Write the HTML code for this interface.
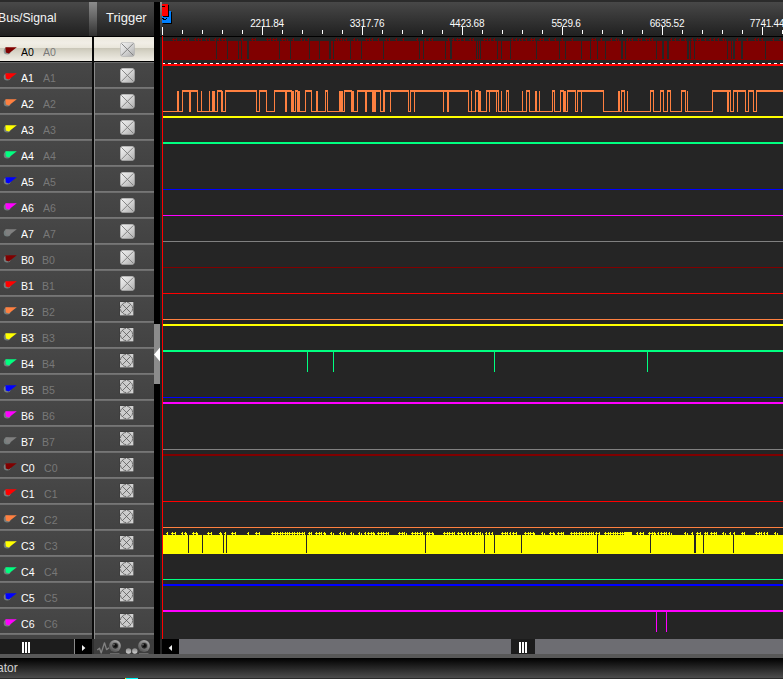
<!DOCTYPE html>
<html><head><meta charset="utf-8"><title>Logic Analyzer</title>
<style>
html,body{margin:0;padding:0;background:#252525;}
body{width:783px;height:679px;overflow:hidden;position:relative;font-family:"Liberation Sans","DejaVu Sans",sans-serif;}
.abs{position:absolute;}
#top{left:0;top:0;width:783px;height:2px;background:#2b2b2b;}
#hdrL{left:0;top:2px;width:154px;height:34px;background:linear-gradient(#494949,#202020);}
#hdrR{left:160px;top:2px;width:623px;height:34px;background:linear-gradient(#484848,#202020);}
#hbar{left:89px;top:2px;width:8px;height:34px;background:linear-gradient(#8c8c8c,#6a6a6a 40%,#303030);}
#hline{left:0;top:36px;width:783px;height:1px;background:#000;}
#split{left:154px;top:2px;width:6px;height:652px;background:#000;}
#grip{left:154px;top:324px;width:6px;height:60px;background:#8c8c8c;}
#edge{left:160px;top:2px;width:2px;height:34px;background:linear-gradient(#9a9a9a,#555 50%,#1f1f1f);}
#edge2{left:160px;top:37px;width:2px;height:602px;background:#1b2222;}
#cursor{left:162px;top:36px;width:1px;height:603px;background:#ff0000;}
.hd{color:#f4f4f4;font-size:13px;line-height:15px;white-space:nowrap;}
.row{left:0;width:154px;height:26px;}
.cellL{left:0;top:0;width:92px;height:24px;background:linear-gradient(#474747,#424242);}
.cellR{left:94px;top:0;width:60px;height:24px;background:linear-gradient(#474747,#424242);}
.sepL{left:0;top:24px;width:92px;height:2px;background:linear-gradient(#7a7a7a,#6a6a6a);}
.sepR{left:94px;top:24px;width:60px;height:2px;background:linear-gradient(#7a7a7a,#6a6a6a);}
.vl{left:92px;top:0;width:2px;height:26px;background:#0a0a0a;}
.vl2{left:94px;top:0;width:1px;height:26px;background:#8a8a8a;}
.sel .cellL,.sel .cellR{background:linear-gradient(#ebe8dd 0%,#f1eee6 25%,#e9e6db 45%,#c9c6b7 46%,#d6d3c6 60%,#f0ede5 100%);}
.sel .sepL,.sel .sepR{background:linear-gradient(#000 50%,#6c6c6c 50%);}
.sel .vl2{display:none;}
.n1,.n2{font-size:11px;line-height:13px;top:9px;white-space:nowrap;transform-origin:0 0;transform:scaleX(0.96);}
.n1{left:21px;color:#ffffff;}
.n2{color:#787878;}
.sel .n1{color:#000;}
.sel .n2{color:#7a7a7a;}
.ico{left:0;top:0;width:20px;height:24px;}
.cb{left:120px;top:5px;width:15px;height:15px;}
.cbs{left:119px;top:4px;width:16px;height:16px;}
.tl{color:#fbfbfb;font-size:10px;line-height:12px;top:18px;width:60px;text-align:center;white-space:nowrap;letter-spacing:-0.25px;}
#sbL{left:0;top:639px;width:74px;height:15px;background:#1c1c1c;}
#sbLl{left:74px;top:639px;width:1px;height:15px;background:#8a8a8a;}
#sbLb{left:75px;top:639px;width:17px;height:15px;background:#000;}
#sbLv{left:92px;top:639px;width:2px;height:15px;background:#2e2e2e;}
#tools{left:94px;top:639px;width:60px;height:15px;background:#3d3d3d;}
#pad{left:0;top:635px;width:154px;height:4px;}
#sbRb{left:162px;top:639px;width:17px;height:15px;background:#000;}
#sbRt{left:179px;top:639px;width:604px;height:15px;background:#6d6d72;}
#sbRh{left:511px;top:639px;width:24px;height:15px;background:#1c1c1c;}
#band{left:0;top:654px;width:783px;height:4px;background:#585858;}
#foot{left:0;top:658px;width:783px;height:20px;background:linear-gradient(#000000,#4c4c4c);}
#foot2{left:0;top:678px;width:783px;height:1px;background:#2b2b2b;}
#ftxt{left:-3px;top:661px;color:#d0d0d0;font-size:12px;line-height:15px;white-space:nowrap;}
#cy{left:125px;top:678px;width:13px;height:1px;background:linear-gradient(90deg,#ffff00 1px,#00ffff 1px);}
</style></head><body>

<svg class="abs" style="left:0;top:0" width="0" height="0"><defs><linearGradient id="g" x1="0" y1="0" x2="1" y2="1"><stop offset="0" stop-color="#f2f2f2"/><stop offset="0.5" stop-color="#d6d6d6"/><stop offset="1" stop-color="#ababab"/></linearGradient></defs></svg>
<div class="abs" id="top"></div><div class="abs" id="hdrL"></div><div class="abs" id="hdrR"></div><div class="abs" id="hbar"></div>
<div class="abs" id="split"></div><div class="abs" id="grip"></div><div class="abs" id="edge"></div><div class="abs" id="edge2"></div><div class="abs" id="hline"></div>
<div class="abs hd" id="h1" style="left:-2px;top:10px;transform-origin:0 0;transform:scaleX(0.94)">Bus/Signal</div>
<div class="abs hd" id="h2" style="left:106px;top:10px;">Trigger</div>
<div class="abs tl" style="left:237px">2211.84</div>
<div class="abs tl" style="left:337px">3317.76</div>
<div class="abs tl" style="left:437px">4423.68</div>
<div class="abs tl" style="left:536px">5529.6</div>
<div class="abs tl" style="left:637px">6635.52</div>
<div class="abs tl" style="left:737px">7741.44</div>
<div class="row abs sel" style="top:37px"><div class="abs cellL"></div><div class="abs cellR"></div><div class="abs sepL"></div><div class="abs sepR"></div><div class="abs vl"></div><div class="abs vl2"></div><svg class="abs ico" width="20" height="24" viewBox="0 0 20 24"><circle cx="7.2" cy="13.9" r="3.5" fill="#808c8c" opacity="0.8"/><polygon points="5.4,10.2 16.8,10.2 8.8,16.6 5.8,15.4" fill="#800000"/></svg><div class="abs n1">A0</div><div class="abs n2" style="left:43px">A0</div><svg class="abs cb" width="15" height="15" viewBox="0 0 15 15"><rect x="0.3" y="0.3" width="14.2" height="14.2" rx="2.8" fill="url(#g)" stroke="#b0b0b0" stroke-width="0.6"/><path d="M1.5 1.5L13.3 13.3M13.3 1.5L1.5 13.3" stroke="#7c7c7c" stroke-width="0.9" fill="none"/></svg></div>
<div class="row abs" style="top:63px"><div class="abs cellL"></div><div class="abs cellR"></div><div class="abs sepL"></div><div class="abs sepR"></div><div class="abs vl"></div><div class="abs vl2"></div><svg class="abs ico" width="20" height="24" viewBox="0 0 20 24"><circle cx="7.2" cy="13.9" r="3.5" fill="#808c8c" opacity="0.8"/><polygon points="5.4,10.2 16.8,10.2 8.8,16.6 5.8,15.4" fill="#ff0000"/></svg><div class="abs n1">A1</div><div class="abs n2" style="left:43px">A1</div><svg class="abs cb" width="15" height="15" viewBox="0 0 15 15"><rect x="0.3" y="0.3" width="14.2" height="14.2" rx="2.8" fill="url(#g)" stroke="#b0b0b0" stroke-width="0.6"/><path d="M1.5 1.5L13.3 13.3M13.3 1.5L1.5 13.3" stroke="#7c7c7c" stroke-width="0.9" fill="none"/></svg></div>
<div class="row abs" style="top:89px"><div class="abs cellL"></div><div class="abs cellR"></div><div class="abs sepL"></div><div class="abs sepR"></div><div class="abs vl"></div><div class="abs vl2"></div><svg class="abs ico" width="20" height="24" viewBox="0 0 20 24"><circle cx="7.2" cy="13.9" r="3.5" fill="#808c8c" opacity="0.8"/><polygon points="5.4,10.2 16.8,10.2 8.8,16.6 5.8,15.4" fill="#ff8040"/></svg><div class="abs n1">A2</div><div class="abs n2" style="left:43px">A2</div><svg class="abs cb" width="15" height="15" viewBox="0 0 15 15"><rect x="0.3" y="0.3" width="14.2" height="14.2" rx="2.8" fill="url(#g)" stroke="#b0b0b0" stroke-width="0.6"/><path d="M1.5 1.5L13.3 13.3M13.3 1.5L1.5 13.3" stroke="#7c7c7c" stroke-width="0.9" fill="none"/></svg></div>
<div class="row abs" style="top:115px"><div class="abs cellL"></div><div class="abs cellR"></div><div class="abs sepL"></div><div class="abs sepR"></div><div class="abs vl"></div><div class="abs vl2"></div><svg class="abs ico" width="20" height="24" viewBox="0 0 20 24"><circle cx="7.2" cy="13.9" r="3.5" fill="#808c8c" opacity="0.8"/><polygon points="5.4,10.2 16.8,10.2 8.8,16.6 5.8,15.4" fill="#ffff00"/></svg><div class="abs n1">A3</div><div class="abs n2" style="left:43px">A3</div><svg class="abs cb" width="15" height="15" viewBox="0 0 15 15"><rect x="0.3" y="0.3" width="14.2" height="14.2" rx="2.8" fill="url(#g)" stroke="#b0b0b0" stroke-width="0.6"/><path d="M1.5 1.5L13.3 13.3M13.3 1.5L1.5 13.3" stroke="#7c7c7c" stroke-width="0.9" fill="none"/></svg></div>
<div class="row abs" style="top:141px"><div class="abs cellL"></div><div class="abs cellR"></div><div class="abs sepL"></div><div class="abs sepR"></div><div class="abs vl"></div><div class="abs vl2"></div><svg class="abs ico" width="20" height="24" viewBox="0 0 20 24"><circle cx="7.2" cy="13.9" r="3.5" fill="#808c8c" opacity="0.8"/><polygon points="5.4,10.2 16.8,10.2 8.8,16.6 5.8,15.4" fill="#00ff80"/></svg><div class="abs n1">A4</div><div class="abs n2" style="left:43px">A4</div><svg class="abs cb" width="15" height="15" viewBox="0 0 15 15"><rect x="0.3" y="0.3" width="14.2" height="14.2" rx="2.8" fill="url(#g)" stroke="#b0b0b0" stroke-width="0.6"/><path d="M1.5 1.5L13.3 13.3M13.3 1.5L1.5 13.3" stroke="#7c7c7c" stroke-width="0.9" fill="none"/></svg></div>
<div class="row abs" style="top:167px"><div class="abs cellL"></div><div class="abs cellR"></div><div class="abs sepL"></div><div class="abs sepR"></div><div class="abs vl"></div><div class="abs vl2"></div><svg class="abs ico" width="20" height="24" viewBox="0 0 20 24"><circle cx="7.2" cy="13.9" r="3.5" fill="#808c8c" opacity="0.8"/><polygon points="5.4,10.2 16.8,10.2 8.8,16.6 5.8,15.4" fill="#0000ff"/></svg><div class="abs n1">A5</div><div class="abs n2" style="left:43px">A5</div><svg class="abs cb" width="15" height="15" viewBox="0 0 15 15"><rect x="0.3" y="0.3" width="14.2" height="14.2" rx="2.8" fill="url(#g)" stroke="#b0b0b0" stroke-width="0.6"/><path d="M1.5 1.5L13.3 13.3M13.3 1.5L1.5 13.3" stroke="#7c7c7c" stroke-width="0.9" fill="none"/></svg></div>
<div class="row abs" style="top:193px"><div class="abs cellL"></div><div class="abs cellR"></div><div class="abs sepL"></div><div class="abs sepR"></div><div class="abs vl"></div><div class="abs vl2"></div><svg class="abs ico" width="20" height="24" viewBox="0 0 20 24"><circle cx="7.2" cy="13.9" r="3.5" fill="#808c8c" opacity="0.8"/><polygon points="5.4,10.2 16.8,10.2 8.8,16.6 5.8,15.4" fill="#ff00ff"/></svg><div class="abs n1">A6</div><div class="abs n2" style="left:43px">A6</div><svg class="abs cb" width="15" height="15" viewBox="0 0 15 15"><rect x="0.3" y="0.3" width="14.2" height="14.2" rx="2.8" fill="url(#g)" stroke="#b0b0b0" stroke-width="0.6"/><path d="M1.5 1.5L13.3 13.3M13.3 1.5L1.5 13.3" stroke="#7c7c7c" stroke-width="0.9" fill="none"/></svg></div>
<div class="row abs" style="top:219px"><div class="abs cellL"></div><div class="abs cellR"></div><div class="abs sepL"></div><div class="abs sepR"></div><div class="abs vl"></div><div class="abs vl2"></div><svg class="abs ico" width="20" height="24" viewBox="0 0 20 24"><circle cx="7.2" cy="13.9" r="3.5" fill="#808c8c" opacity="0.8"/><polygon points="5.4,10.2 16.8,10.2 8.8,16.6 5.8,15.4" fill="#808080"/></svg><div class="abs n1">A7</div><div class="abs n2" style="left:43px">A7</div><svg class="abs cb" width="15" height="15" viewBox="0 0 15 15"><rect x="0.3" y="0.3" width="14.2" height="14.2" rx="2.8" fill="url(#g)" stroke="#b0b0b0" stroke-width="0.6"/><path d="M1.5 1.5L13.3 13.3M13.3 1.5L1.5 13.3" stroke="#7c7c7c" stroke-width="0.9" fill="none"/></svg></div>
<div class="row abs" style="top:245px"><div class="abs cellL"></div><div class="abs cellR"></div><div class="abs sepL"></div><div class="abs sepR"></div><div class="abs vl"></div><div class="abs vl2"></div><svg class="abs ico" width="20" height="24" viewBox="0 0 20 24"><circle cx="7.2" cy="13.9" r="3.5" fill="#808c8c" opacity="0.8"/><polygon points="5.4,10.2 16.8,10.2 8.8,16.6 5.8,15.4" fill="#800000"/></svg><div class="abs n1">B0</div><div class="abs n2" style="left:41.5px">B0</div><svg class="abs cb" width="15" height="15" viewBox="0 0 15 15"><rect x="0.3" y="0.3" width="14.2" height="14.2" rx="2.8" fill="url(#g)" stroke="#b0b0b0" stroke-width="0.6"/><path d="M1.5 1.5L13.3 13.3M13.3 1.5L1.5 13.3" stroke="#7c7c7c" stroke-width="0.9" fill="none"/></svg></div>
<div class="row abs" style="top:271px"><div class="abs cellL"></div><div class="abs cellR"></div><div class="abs sepL"></div><div class="abs sepR"></div><div class="abs vl"></div><div class="abs vl2"></div><svg class="abs ico" width="20" height="24" viewBox="0 0 20 24"><circle cx="7.2" cy="13.9" r="3.5" fill="#808c8c" opacity="0.8"/><polygon points="5.4,10.2 16.8,10.2 8.8,16.6 5.8,15.4" fill="#ff0000"/></svg><div class="abs n1">B1</div><div class="abs n2" style="left:41.5px">B1</div><svg class="abs cb" width="15" height="15" viewBox="0 0 15 15"><rect x="0.3" y="0.3" width="14.2" height="14.2" rx="2.8" fill="url(#g)" stroke="#b0b0b0" stroke-width="0.6"/><path d="M1.5 1.5L13.3 13.3M13.3 1.5L1.5 13.3" stroke="#7c7c7c" stroke-width="0.9" fill="none"/></svg></div>
<div class="row abs" style="top:297px"><div class="abs cellL"></div><div class="abs cellR"></div><div class="abs sepL"></div><div class="abs sepR"></div><div class="abs vl"></div><div class="abs vl2"></div><svg class="abs ico" width="20" height="24" viewBox="0 0 20 24"><circle cx="7.2" cy="13.9" r="3.5" fill="#808c8c" opacity="0.8"/><polygon points="5.4,10.2 16.8,10.2 8.8,16.6 5.8,15.4" fill="#ff8040"/></svg><div class="abs n1">B2</div><div class="abs n2" style="left:41.5px">B2</div><svg class="abs cbs" width="16" height="16" viewBox="-1 -1 16 16"><rect x="-0.5" y="-0.5" width="14.3" height="14.3" fill="#383838"/><rect x="0" y="0" width="13.4" height="13.4" fill="#d0d0d0"/><circle cx="6.5" cy="6.5" r="6.1" fill="#cccccc" stroke="#505050" stroke-opacity="0.85" stroke-width="0.9" stroke-dasharray="3.4 1.4"/><path d="M2 2L11 11M11 2L2 11" stroke="#505050" stroke-width="0.8" stroke-opacity="0.9" fill="none"/></svg></div>
<div class="row abs" style="top:323px"><div class="abs cellL"></div><div class="abs cellR"></div><div class="abs sepL"></div><div class="abs sepR"></div><div class="abs vl"></div><div class="abs vl2"></div><svg class="abs ico" width="20" height="24" viewBox="0 0 20 24"><circle cx="7.2" cy="13.9" r="3.5" fill="#808c8c" opacity="0.8"/><polygon points="5.4,10.2 16.8,10.2 8.8,16.6 5.8,15.4" fill="#ffff00"/></svg><div class="abs n1">B3</div><div class="abs n2" style="left:41.5px">B3</div><svg class="abs cbs" width="16" height="16" viewBox="-1 -1 16 16"><rect x="-0.5" y="-0.5" width="14.3" height="14.3" fill="#383838"/><rect x="0" y="0" width="13.4" height="13.4" fill="#d0d0d0"/><circle cx="6.5" cy="6.5" r="6.1" fill="#cccccc" stroke="#505050" stroke-opacity="0.85" stroke-width="0.9" stroke-dasharray="3.4 1.4"/><path d="M2 2L11 11M11 2L2 11" stroke="#505050" stroke-width="0.8" stroke-opacity="0.9" fill="none"/></svg></div>
<div class="row abs" style="top:349px"><div class="abs cellL"></div><div class="abs cellR"></div><div class="abs sepL"></div><div class="abs sepR"></div><div class="abs vl"></div><div class="abs vl2"></div><svg class="abs ico" width="20" height="24" viewBox="0 0 20 24"><circle cx="7.2" cy="13.9" r="3.5" fill="#808c8c" opacity="0.8"/><polygon points="5.4,10.2 16.8,10.2 8.8,16.6 5.8,15.4" fill="#00ff80"/></svg><div class="abs n1">B4</div><div class="abs n2" style="left:41.5px">B4</div><svg class="abs cbs" width="16" height="16" viewBox="-1 -1 16 16"><rect x="-0.5" y="-0.5" width="14.3" height="14.3" fill="#383838"/><rect x="0" y="0" width="13.4" height="13.4" fill="#d0d0d0"/><circle cx="6.5" cy="6.5" r="6.1" fill="#cccccc" stroke="#505050" stroke-opacity="0.85" stroke-width="0.9" stroke-dasharray="3.4 1.4"/><path d="M2 2L11 11M11 2L2 11" stroke="#505050" stroke-width="0.8" stroke-opacity="0.9" fill="none"/></svg></div>
<div class="row abs" style="top:375px"><div class="abs cellL"></div><div class="abs cellR"></div><div class="abs sepL"></div><div class="abs sepR"></div><div class="abs vl"></div><div class="abs vl2"></div><svg class="abs ico" width="20" height="24" viewBox="0 0 20 24"><circle cx="7.2" cy="13.9" r="3.5" fill="#808c8c" opacity="0.8"/><polygon points="5.4,10.2 16.8,10.2 8.8,16.6 5.8,15.4" fill="#0000ff"/></svg><div class="abs n1">B5</div><div class="abs n2" style="left:41.5px">B5</div><svg class="abs cbs" width="16" height="16" viewBox="-1 -1 16 16"><rect x="-0.5" y="-0.5" width="14.3" height="14.3" fill="#383838"/><rect x="0" y="0" width="13.4" height="13.4" fill="#d0d0d0"/><circle cx="6.5" cy="6.5" r="6.1" fill="#cccccc" stroke="#505050" stroke-opacity="0.85" stroke-width="0.9" stroke-dasharray="3.4 1.4"/><path d="M2 2L11 11M11 2L2 11" stroke="#505050" stroke-width="0.8" stroke-opacity="0.9" fill="none"/></svg></div>
<div class="row abs" style="top:401px"><div class="abs cellL"></div><div class="abs cellR"></div><div class="abs sepL"></div><div class="abs sepR"></div><div class="abs vl"></div><div class="abs vl2"></div><svg class="abs ico" width="20" height="24" viewBox="0 0 20 24"><circle cx="7.2" cy="13.9" r="3.5" fill="#808c8c" opacity="0.8"/><polygon points="5.4,10.2 16.8,10.2 8.8,16.6 5.8,15.4" fill="#ff00ff"/></svg><div class="abs n1">B6</div><div class="abs n2" style="left:41.5px">B6</div><svg class="abs cbs" width="16" height="16" viewBox="-1 -1 16 16"><rect x="-0.5" y="-0.5" width="14.3" height="14.3" fill="#383838"/><rect x="0" y="0" width="13.4" height="13.4" fill="#d0d0d0"/><circle cx="6.5" cy="6.5" r="6.1" fill="#cccccc" stroke="#505050" stroke-opacity="0.85" stroke-width="0.9" stroke-dasharray="3.4 1.4"/><path d="M2 2L11 11M11 2L2 11" stroke="#505050" stroke-width="0.8" stroke-opacity="0.9" fill="none"/></svg></div>
<div class="row abs" style="top:427px"><div class="abs cellL"></div><div class="abs cellR"></div><div class="abs sepL"></div><div class="abs sepR"></div><div class="abs vl"></div><div class="abs vl2"></div><svg class="abs ico" width="20" height="24" viewBox="0 0 20 24"><circle cx="7.2" cy="13.9" r="3.5" fill="#808c8c" opacity="0.8"/><polygon points="5.4,10.2 16.8,10.2 8.8,16.6 5.8,15.4" fill="#808080"/></svg><div class="abs n1">B7</div><div class="abs n2" style="left:41.5px">B7</div><svg class="abs cbs" width="16" height="16" viewBox="-1 -1 16 16"><rect x="-0.5" y="-0.5" width="14.3" height="14.3" fill="#383838"/><rect x="0" y="0" width="13.4" height="13.4" fill="#d0d0d0"/><circle cx="6.5" cy="6.5" r="6.1" fill="#cccccc" stroke="#505050" stroke-opacity="0.85" stroke-width="0.9" stroke-dasharray="3.4 1.4"/><path d="M2 2L11 11M11 2L2 11" stroke="#505050" stroke-width="0.8" stroke-opacity="0.9" fill="none"/></svg></div>
<div class="row abs" style="top:453px"><div class="abs cellL"></div><div class="abs cellR"></div><div class="abs sepL"></div><div class="abs sepR"></div><div class="abs vl"></div><div class="abs vl2"></div><svg class="abs ico" width="20" height="24" viewBox="0 0 20 24"><circle cx="7.2" cy="13.9" r="3.5" fill="#808c8c" opacity="0.8"/><polygon points="5.4,10.2 16.8,10.2 8.8,16.6 5.8,15.4" fill="#800000"/></svg><div class="abs n1">C0</div><div class="abs n2" style="left:43.6px">C0</div><svg class="abs cbs" width="16" height="16" viewBox="-1 -1 16 16"><rect x="-0.5" y="-0.5" width="14.3" height="14.3" fill="#383838"/><rect x="0" y="0" width="13.4" height="13.4" fill="#d0d0d0"/><circle cx="6.5" cy="6.5" r="6.1" fill="#cccccc" stroke="#505050" stroke-opacity="0.85" stroke-width="0.9" stroke-dasharray="3.4 1.4"/><path d="M2 2L11 11M11 2L2 11" stroke="#505050" stroke-width="0.8" stroke-opacity="0.9" fill="none"/></svg></div>
<div class="row abs" style="top:479px"><div class="abs cellL"></div><div class="abs cellR"></div><div class="abs sepL"></div><div class="abs sepR"></div><div class="abs vl"></div><div class="abs vl2"></div><svg class="abs ico" width="20" height="24" viewBox="0 0 20 24"><circle cx="7.2" cy="13.9" r="3.5" fill="#808c8c" opacity="0.8"/><polygon points="5.4,10.2 16.8,10.2 8.8,16.6 5.8,15.4" fill="#ff0000"/></svg><div class="abs n1">C1</div><div class="abs n2" style="left:43.6px">C1</div><svg class="abs cbs" width="16" height="16" viewBox="-1 -1 16 16"><rect x="-0.5" y="-0.5" width="14.3" height="14.3" fill="#383838"/><rect x="0" y="0" width="13.4" height="13.4" fill="#d0d0d0"/><circle cx="6.5" cy="6.5" r="6.1" fill="#cccccc" stroke="#505050" stroke-opacity="0.85" stroke-width="0.9" stroke-dasharray="3.4 1.4"/><path d="M2 2L11 11M11 2L2 11" stroke="#505050" stroke-width="0.8" stroke-opacity="0.9" fill="none"/></svg></div>
<div class="row abs" style="top:505px"><div class="abs cellL"></div><div class="abs cellR"></div><div class="abs sepL"></div><div class="abs sepR"></div><div class="abs vl"></div><div class="abs vl2"></div><svg class="abs ico" width="20" height="24" viewBox="0 0 20 24"><circle cx="7.2" cy="13.9" r="3.5" fill="#808c8c" opacity="0.8"/><polygon points="5.4,10.2 16.8,10.2 8.8,16.6 5.8,15.4" fill="#ff8040"/></svg><div class="abs n1">C2</div><div class="abs n2" style="left:43.6px">C2</div><svg class="abs cbs" width="16" height="16" viewBox="-1 -1 16 16"><rect x="-0.5" y="-0.5" width="14.3" height="14.3" fill="#383838"/><rect x="0" y="0" width="13.4" height="13.4" fill="#d0d0d0"/><circle cx="6.5" cy="6.5" r="6.1" fill="#cccccc" stroke="#505050" stroke-opacity="0.85" stroke-width="0.9" stroke-dasharray="3.4 1.4"/><path d="M2 2L11 11M11 2L2 11" stroke="#505050" stroke-width="0.8" stroke-opacity="0.9" fill="none"/></svg></div>
<div class="row abs" style="top:531px"><div class="abs cellL"></div><div class="abs cellR"></div><div class="abs sepL"></div><div class="abs sepR"></div><div class="abs vl"></div><div class="abs vl2"></div><svg class="abs ico" width="20" height="24" viewBox="0 0 20 24"><circle cx="7.2" cy="13.9" r="3.5" fill="#808c8c" opacity="0.8"/><polygon points="5.4,10.2 16.8,10.2 8.8,16.6 5.8,15.4" fill="#ffff00"/></svg><div class="abs n1">C3</div><div class="abs n2" style="left:43.6px">C3</div><svg class="abs cbs" width="16" height="16" viewBox="-1 -1 16 16"><rect x="-0.5" y="-0.5" width="14.3" height="14.3" fill="#383838"/><rect x="0" y="0" width="13.4" height="13.4" fill="#d0d0d0"/><circle cx="6.5" cy="6.5" r="6.1" fill="#cccccc" stroke="#505050" stroke-opacity="0.85" stroke-width="0.9" stroke-dasharray="3.4 1.4"/><path d="M2 2L11 11M11 2L2 11" stroke="#505050" stroke-width="0.8" stroke-opacity="0.9" fill="none"/></svg></div>
<div class="row abs" style="top:557px"><div class="abs cellL"></div><div class="abs cellR"></div><div class="abs sepL"></div><div class="abs sepR"></div><div class="abs vl"></div><div class="abs vl2"></div><svg class="abs ico" width="20" height="24" viewBox="0 0 20 24"><circle cx="7.2" cy="13.9" r="3.5" fill="#808c8c" opacity="0.8"/><polygon points="5.4,10.2 16.8,10.2 8.8,16.6 5.8,15.4" fill="#00ff80"/></svg><div class="abs n1">C4</div><div class="abs n2" style="left:43.6px">C4</div><svg class="abs cbs" width="16" height="16" viewBox="-1 -1 16 16"><rect x="-0.5" y="-0.5" width="14.3" height="14.3" fill="#383838"/><rect x="0" y="0" width="13.4" height="13.4" fill="#d0d0d0"/><circle cx="6.5" cy="6.5" r="6.1" fill="#cccccc" stroke="#505050" stroke-opacity="0.85" stroke-width="0.9" stroke-dasharray="3.4 1.4"/><path d="M2 2L11 11M11 2L2 11" stroke="#505050" stroke-width="0.8" stroke-opacity="0.9" fill="none"/></svg></div>
<div class="row abs" style="top:583px"><div class="abs cellL"></div><div class="abs cellR"></div><div class="abs sepL"></div><div class="abs sepR"></div><div class="abs vl"></div><div class="abs vl2"></div><svg class="abs ico" width="20" height="24" viewBox="0 0 20 24"><circle cx="7.2" cy="13.9" r="3.5" fill="#808c8c" opacity="0.8"/><polygon points="5.4,10.2 16.8,10.2 8.8,16.6 5.8,15.4" fill="#0000ff"/></svg><div class="abs n1">C5</div><div class="abs n2" style="left:43.6px">C5</div><svg class="abs cbs" width="16" height="16" viewBox="-1 -1 16 16"><rect x="-0.5" y="-0.5" width="14.3" height="14.3" fill="#383838"/><rect x="0" y="0" width="13.4" height="13.4" fill="#d0d0d0"/><circle cx="6.5" cy="6.5" r="6.1" fill="#cccccc" stroke="#505050" stroke-opacity="0.85" stroke-width="0.9" stroke-dasharray="3.4 1.4"/><path d="M2 2L11 11M11 2L2 11" stroke="#505050" stroke-width="0.8" stroke-opacity="0.9" fill="none"/></svg></div>
<div class="row abs" style="top:609px"><div class="abs cellL"></div><div class="abs cellR"></div><div class="abs sepL"></div><div class="abs sepR"></div><div class="abs vl"></div><div class="abs vl2"></div><svg class="abs ico" width="20" height="24" viewBox="0 0 20 24"><circle cx="7.2" cy="13.9" r="3.5" fill="#808c8c" opacity="0.8"/><polygon points="5.4,10.2 16.8,10.2 8.8,16.6 5.8,15.4" fill="#ff00ff"/></svg><div class="abs n1">C6</div><div class="abs n2" style="left:43.6px">C6</div><svg class="abs cbs" width="16" height="16" viewBox="-1 -1 16 16"><rect x="-0.5" y="-0.5" width="14.3" height="14.3" fill="#383838"/><rect x="0" y="0" width="13.4" height="13.4" fill="#d0d0d0"/><circle cx="6.5" cy="6.5" r="6.1" fill="#cccccc" stroke="#505050" stroke-opacity="0.85" stroke-width="0.9" stroke-dasharray="3.4 1.4"/><path d="M2 2L11 11M11 2L2 11" stroke="#505050" stroke-width="0.8" stroke-opacity="0.9" fill="none"/></svg></div>
<div class="abs" id="pad"><div class="abs" style="left:0;top:0;width:92px;height:4px;background:#444"></div><div class="abs" style="left:94px;top:0;width:60px;height:4px;background:#444"></div><div class="abs" style="left:92px;top:0;width:2px;height:4px;background:#0a0a0a"></div><div class="abs" style="left:94px;top:0;width:1px;height:4px;background:#8a8a8a"></div></div>
<svg class="abs" style="left:0;top:0" width="783" height="679" viewBox="0 0 783 679" shape-rendering="crispEdges">
<rect x="163" y="41" width="620" height="19" fill="#800000"/><rect x="216" y="41" width="1" height="18" fill="#252525"/><rect x="227" y="41" width="1" height="18" fill="#252525"/><rect x="238" y="41" width="1" height="18" fill="#252525"/><rect x="241" y="41" width="1" height="18" fill="#252525"/><rect x="247" y="41" width="2" height="18" fill="#252525"/><rect x="279" y="41" width="1" height="18" fill="#252525"/><rect x="290" y="41" width="1" height="18" fill="#252525"/><rect x="309" y="41" width="1" height="18" fill="#252525"/><rect x="319" y="41" width="1" height="18" fill="#252525"/><rect x="329" y="41" width="2" height="18" fill="#252525"/><rect x="333" y="41" width="1" height="18" fill="#252525"/><rect x="350" y="41" width="1" height="18" fill="#252525"/><rect x="361" y="41" width="1" height="18" fill="#252525"/><rect x="383" y="41" width="1" height="18" fill="#252525"/><rect x="419" y="41" width="1" height="18" fill="#252525"/><rect x="423" y="41" width="1" height="18" fill="#252525"/><rect x="445" y="41" width="1" height="18" fill="#252525"/><rect x="450" y="41" width="2" height="18" fill="#252525"/><rect x="476" y="41" width="1" height="18" fill="#252525"/><rect x="478" y="41" width="1" height="18" fill="#252525"/><rect x="480" y="41" width="1" height="18" fill="#252525"/><rect x="497" y="41" width="1" height="18" fill="#252525"/><rect x="501" y="41" width="1" height="18" fill="#252525"/><rect x="510" y="41" width="1" height="18" fill="#252525"/><rect x="536" y="41" width="1" height="18" fill="#252525"/><rect x="559" y="41" width="1" height="18" fill="#252525"/><rect x="565" y="41" width="1" height="18" fill="#252525"/><rect x="581" y="41" width="1" height="18" fill="#252525"/><rect x="590" y="41" width="1" height="18" fill="#252525"/><rect x="597" y="41" width="1" height="18" fill="#252525"/><rect x="605" y="41" width="1" height="18" fill="#252525"/><rect x="621" y="41" width="2" height="18" fill="#252525"/><rect x="625" y="41" width="1" height="18" fill="#252525"/><rect x="656" y="41" width="1" height="18" fill="#252525"/><rect x="662" y="41" width="2" height="18" fill="#252525"/><rect x="667" y="41" width="2" height="18" fill="#252525"/><rect x="687" y="41" width="2" height="18" fill="#252525"/><rect x="690" y="41" width="1" height="18" fill="#252525"/><rect x="694" y="41" width="1" height="18" fill="#252525"/><rect x="727" y="41" width="1" height="18" fill="#252525"/><rect x="731" y="41" width="1" height="18" fill="#252525"/><rect x="733" y="41" width="2" height="18" fill="#252525"/><rect x="741" y="41" width="2" height="18" fill="#252525"/><rect x="765" y="41" width="1" height="18" fill="#252525"/><rect x="172" y="39" width="3" height="1" fill="#800000"/><rect x="173" y="38" width="1" height="3" fill="#800000"/><rect x="176" y="38" width="1" height="3" fill="#800000"/><rect x="175" y="39" width="1" height="1" fill="#800000"/><rect x="181" y="39" width="3" height="1" fill="#800000"/><rect x="182" y="38" width="1" height="3" fill="#800000"/><rect x="185" y="38" width="1" height="3" fill="#800000"/><rect x="184" y="39" width="1" height="1" fill="#800000"/><rect x="188" y="38" width="1" height="3" fill="#800000"/><rect x="187" y="39" width="1" height="1" fill="#800000"/><rect x="195" y="38" width="1" height="3" fill="#800000"/><rect x="194" y="39" width="1" height="1" fill="#800000"/><rect x="197" y="39" width="3" height="1" fill="#800000"/><rect x="198" y="38" width="1" height="3" fill="#800000"/><rect x="201" y="38" width="1" height="3" fill="#800000"/><rect x="200" y="39" width="1" height="1" fill="#800000"/><rect x="206" y="38" width="1" height="3" fill="#800000"/><rect x="205" y="39" width="1" height="1" fill="#800000"/><rect x="209" y="38" width="1" height="3" fill="#800000"/><rect x="208" y="39" width="1" height="1" fill="#800000"/><rect x="215" y="38" width="1" height="3" fill="#800000"/><rect x="214" y="39" width="1" height="1" fill="#800000"/><rect x="219" y="38" width="1" height="3" fill="#800000"/><rect x="218" y="39" width="1" height="1" fill="#800000"/><rect x="221" y="39" width="3" height="1" fill="#800000"/><rect x="222" y="38" width="1" height="3" fill="#800000"/><rect x="225" y="38" width="1" height="3" fill="#800000"/><rect x="224" y="39" width="1" height="1" fill="#800000"/><rect x="242" y="38" width="1" height="3" fill="#800000"/><rect x="241" y="39" width="1" height="1" fill="#800000"/><rect x="251" y="39" width="3" height="1" fill="#800000"/><rect x="252" y="38" width="1" height="3" fill="#800000"/><rect x="255" y="38" width="1" height="3" fill="#800000"/><rect x="254" y="39" width="1" height="1" fill="#800000"/><rect x="266" y="39" width="3" height="1" fill="#800000"/><rect x="267" y="38" width="1" height="3" fill="#800000"/><rect x="270" y="38" width="1" height="3" fill="#800000"/><rect x="269" y="39" width="1" height="1" fill="#800000"/><rect x="272" y="39" width="3" height="1" fill="#800000"/><rect x="273" y="38" width="1" height="3" fill="#800000"/><rect x="276" y="38" width="1" height="3" fill="#800000"/><rect x="275" y="39" width="1" height="1" fill="#800000"/><rect x="281" y="39" width="3" height="1" fill="#800000"/><rect x="282" y="38" width="1" height="3" fill="#800000"/><rect x="285" y="38" width="1" height="3" fill="#800000"/><rect x="284" y="39" width="1" height="1" fill="#800000"/><rect x="287" y="39" width="1" height="2" fill="#800000"/><rect x="293" y="38" width="1" height="3" fill="#800000"/><rect x="292" y="39" width="1" height="1" fill="#800000"/><rect x="301" y="38" width="1" height="3" fill="#800000"/><rect x="300" y="39" width="1" height="1" fill="#800000"/><rect x="304" y="39" width="1" height="2" fill="#800000"/><rect x="308" y="38" width="1" height="3" fill="#800000"/><rect x="307" y="39" width="1" height="1" fill="#800000"/><rect x="336" y="38" width="1" height="3" fill="#800000"/><rect x="335" y="39" width="1" height="1" fill="#800000"/><rect x="338" y="39" width="1" height="2" fill="#800000"/><rect x="341" y="38" width="1" height="3" fill="#800000"/><rect x="340" y="39" width="1" height="1" fill="#800000"/><rect x="343" y="39" width="1" height="2" fill="#800000"/><rect x="346" y="38" width="1" height="3" fill="#800000"/><rect x="345" y="39" width="1" height="1" fill="#800000"/><rect x="354" y="38" width="1" height="3" fill="#800000"/><rect x="353" y="39" width="1" height="1" fill="#800000"/><rect x="357" y="39" width="1" height="2" fill="#800000"/><rect x="365" y="39" width="3" height="1" fill="#800000"/><rect x="366" y="38" width="1" height="3" fill="#800000"/><rect x="369" y="38" width="1" height="3" fill="#800000"/><rect x="368" y="39" width="1" height="1" fill="#800000"/><rect x="372" y="38" width="1" height="3" fill="#800000"/><rect x="371" y="39" width="1" height="1" fill="#800000"/><rect x="378" y="38" width="1" height="3" fill="#800000"/><rect x="377" y="39" width="1" height="1" fill="#800000"/><rect x="386" y="38" width="1" height="3" fill="#800000"/><rect x="385" y="39" width="1" height="1" fill="#800000"/><rect x="389" y="38" width="1" height="3" fill="#800000"/><rect x="388" y="39" width="1" height="1" fill="#800000"/><rect x="396" y="38" width="1" height="3" fill="#800000"/><rect x="395" y="39" width="1" height="1" fill="#800000"/><rect x="403" y="38" width="1" height="3" fill="#800000"/><rect x="402" y="39" width="1" height="1" fill="#800000"/><rect x="417" y="38" width="1" height="3" fill="#800000"/><rect x="416" y="39" width="1" height="1" fill="#800000"/><rect x="425" y="38" width="1" height="3" fill="#800000"/><rect x="424" y="39" width="1" height="1" fill="#800000"/><rect x="429" y="38" width="1" height="3" fill="#800000"/><rect x="428" y="39" width="1" height="1" fill="#800000"/><rect x="432" y="38" width="1" height="3" fill="#800000"/><rect x="431" y="39" width="1" height="1" fill="#800000"/><rect x="448" y="38" width="1" height="3" fill="#800000"/><rect x="447" y="39" width="1" height="1" fill="#800000"/><rect x="453" y="38" width="1" height="3" fill="#800000"/><rect x="452" y="39" width="1" height="1" fill="#800000"/><rect x="456" y="39" width="3" height="1" fill="#800000"/><rect x="457" y="38" width="1" height="3" fill="#800000"/><rect x="460" y="38" width="1" height="3" fill="#800000"/><rect x="459" y="39" width="1" height="1" fill="#800000"/><rect x="464" y="38" width="1" height="3" fill="#800000"/><rect x="463" y="39" width="1" height="1" fill="#800000"/><rect x="470" y="38" width="1" height="3" fill="#800000"/><rect x="469" y="39" width="1" height="1" fill="#800000"/><rect x="473" y="38" width="1" height="3" fill="#800000"/><rect x="472" y="39" width="1" height="1" fill="#800000"/><rect x="483" y="39" width="3" height="1" fill="#800000"/><rect x="484" y="38" width="1" height="3" fill="#800000"/><rect x="487" y="38" width="1" height="3" fill="#800000"/><rect x="486" y="39" width="1" height="1" fill="#800000"/><rect x="490" y="38" width="1" height="3" fill="#800000"/><rect x="489" y="39" width="1" height="1" fill="#800000"/><rect x="494" y="38" width="1" height="3" fill="#800000"/><rect x="493" y="39" width="1" height="1" fill="#800000"/><rect x="512" y="38" width="1" height="3" fill="#800000"/><rect x="511" y="39" width="1" height="1" fill="#800000"/><rect x="516" y="38" width="1" height="3" fill="#800000"/><rect x="515" y="39" width="1" height="1" fill="#800000"/><rect x="519" y="39" width="1" height="2" fill="#800000"/><rect x="522" y="38" width="1" height="3" fill="#800000"/><rect x="521" y="39" width="1" height="1" fill="#800000"/><rect x="526" y="38" width="1" height="3" fill="#800000"/><rect x="525" y="39" width="1" height="1" fill="#800000"/><rect x="530" y="39" width="3" height="1" fill="#800000"/><rect x="531" y="38" width="1" height="3" fill="#800000"/><rect x="534" y="38" width="1" height="3" fill="#800000"/><rect x="533" y="39" width="1" height="1" fill="#800000"/><rect x="539" y="39" width="3" height="1" fill="#800000"/><rect x="540" y="38" width="1" height="3" fill="#800000"/><rect x="543" y="38" width="1" height="3" fill="#800000"/><rect x="542" y="39" width="1" height="1" fill="#800000"/><rect x="549" y="38" width="1" height="3" fill="#800000"/><rect x="548" y="39" width="1" height="1" fill="#800000"/><rect x="555" y="38" width="1" height="3" fill="#800000"/><rect x="554" y="39" width="1" height="1" fill="#800000"/><rect x="562" y="38" width="1" height="3" fill="#800000"/><rect x="561" y="39" width="1" height="1" fill="#800000"/><rect x="572" y="38" width="1" height="3" fill="#800000"/><rect x="571" y="39" width="1" height="1" fill="#800000"/><rect x="591" y="39" width="3" height="1" fill="#800000"/><rect x="592" y="38" width="1" height="3" fill="#800000"/><rect x="595" y="38" width="1" height="3" fill="#800000"/><rect x="594" y="39" width="1" height="1" fill="#800000"/><rect x="601" y="38" width="1" height="3" fill="#800000"/><rect x="600" y="39" width="1" height="1" fill="#800000"/><rect x="611" y="38" width="1" height="3" fill="#800000"/><rect x="610" y="39" width="1" height="1" fill="#800000"/><rect x="616" y="38" width="1" height="3" fill="#800000"/><rect x="615" y="39" width="1" height="1" fill="#800000"/><rect x="618" y="39" width="1" height="2" fill="#800000"/><rect x="627" y="38" width="1" height="3" fill="#800000"/><rect x="626" y="39" width="1" height="1" fill="#800000"/><rect x="629" y="39" width="1" height="2" fill="#800000"/><rect x="632" y="38" width="1" height="3" fill="#800000"/><rect x="631" y="39" width="1" height="1" fill="#800000"/><rect x="637" y="39" width="3" height="1" fill="#800000"/><rect x="638" y="38" width="1" height="3" fill="#800000"/><rect x="641" y="38" width="1" height="3" fill="#800000"/><rect x="640" y="39" width="1" height="1" fill="#800000"/><rect x="645" y="39" width="3" height="1" fill="#800000"/><rect x="646" y="38" width="1" height="3" fill="#800000"/><rect x="649" y="38" width="1" height="3" fill="#800000"/><rect x="648" y="39" width="1" height="1" fill="#800000"/><rect x="652" y="38" width="1" height="3" fill="#800000"/><rect x="651" y="39" width="1" height="1" fill="#800000"/><rect x="671" y="38" width="1" height="3" fill="#800000"/><rect x="670" y="39" width="1" height="1" fill="#800000"/><rect x="675" y="38" width="1" height="3" fill="#800000"/><rect x="674" y="39" width="1" height="1" fill="#800000"/><rect x="680" y="38" width="1" height="3" fill="#800000"/><rect x="679" y="39" width="1" height="1" fill="#800000"/><rect x="685" y="38" width="1" height="3" fill="#800000"/><rect x="684" y="39" width="1" height="1" fill="#800000"/><rect x="692" y="38" width="1" height="3" fill="#800000"/><rect x="691" y="39" width="1" height="1" fill="#800000"/><rect x="696" y="39" width="3" height="1" fill="#800000"/><rect x="697" y="38" width="1" height="3" fill="#800000"/><rect x="700" y="38" width="1" height="3" fill="#800000"/><rect x="699" y="39" width="1" height="1" fill="#800000"/><rect x="705" y="38" width="1" height="3" fill="#800000"/><rect x="704" y="39" width="1" height="1" fill="#800000"/><rect x="710" y="38" width="1" height="3" fill="#800000"/><rect x="709" y="39" width="1" height="1" fill="#800000"/><rect x="714" y="38" width="1" height="3" fill="#800000"/><rect x="713" y="39" width="1" height="1" fill="#800000"/><rect x="718" y="38" width="1" height="3" fill="#800000"/><rect x="717" y="39" width="1" height="1" fill="#800000"/><rect x="723" y="38" width="1" height="3" fill="#800000"/><rect x="722" y="39" width="1" height="1" fill="#800000"/><rect x="725" y="39" width="1" height="2" fill="#800000"/><rect x="737" y="38" width="1" height="3" fill="#800000"/><rect x="736" y="39" width="1" height="1" fill="#800000"/><rect x="747" y="38" width="1" height="3" fill="#800000"/><rect x="746" y="39" width="1" height="1" fill="#800000"/><rect x="755" y="38" width="1" height="3" fill="#800000"/><rect x="754" y="39" width="1" height="1" fill="#800000"/><rect x="758" y="38" width="1" height="3" fill="#800000"/><rect x="757" y="39" width="1" height="1" fill="#800000"/><rect x="762" y="38" width="1" height="3" fill="#800000"/><rect x="761" y="39" width="1" height="1" fill="#800000"/><rect x="773" y="38" width="1" height="3" fill="#800000"/><rect x="772" y="39" width="1" height="1" fill="#800000"/><rect x="780" y="38" width="1" height="3" fill="#800000"/><rect x="779" y="39" width="1" height="1" fill="#800000"/><rect x="163" y="64" width="620" height="2" fill="#ff0000"/><rect x="177" y="91" width="2" height="21" fill="#ff8040"/><rect x="163" y="111" width="20" height="1" fill="#ff8040"/><rect x="182" y="91" width="1" height="21" fill="#ff8040"/><rect x="189" y="91" width="2" height="21" fill="#ff8040"/><rect x="182" y="90" width="16" height="2" fill="#ff8040"/><rect x="197" y="91" width="1" height="21" fill="#ff8040"/><rect x="201" y="91" width="1" height="21" fill="#ff8040"/><rect x="209" y="91" width="1" height="21" fill="#ff8040"/><rect x="212" y="91" width="3" height="21" fill="#ff8040"/><rect x="197" y="111" width="21" height="1" fill="#ff8040"/><rect x="217" y="91" width="1" height="21" fill="#ff8040"/><rect x="221" y="91" width="2" height="21" fill="#ff8040"/><rect x="217" y="90" width="5" height="2" fill="#ff8040"/><rect x="221" y="91" width="1" height="21" fill="#ff8040"/><rect x="221" y="111" width="5" height="1" fill="#ff8040"/><rect x="225" y="91" width="1" height="21" fill="#ff8040"/><rect x="225" y="90" width="32" height="2" fill="#ff8040"/><rect x="256" y="91" width="1" height="21" fill="#ff8040"/><rect x="256" y="111" width="4" height="1" fill="#ff8040"/><rect x="259" y="91" width="1" height="21" fill="#ff8040"/><rect x="259" y="90" width="8" height="2" fill="#ff8040"/><rect x="266" y="91" width="1" height="21" fill="#ff8040"/><rect x="266" y="111" width="9" height="1" fill="#ff8040"/><rect x="274" y="91" width="1" height="21" fill="#ff8040"/><rect x="285" y="91" width="2" height="21" fill="#ff8040"/><rect x="291" y="91" width="3" height="21" fill="#ff8040"/><rect x="274" y="90" width="18" height="2" fill="#ff8040"/><rect x="291" y="91" width="1" height="21" fill="#ff8040"/><rect x="291" y="111" width="5" height="1" fill="#ff8040"/><rect x="295" y="91" width="1" height="21" fill="#ff8040"/><rect x="297" y="91" width="3" height="21" fill="#ff8040"/><rect x="295" y="90" width="3" height="2" fill="#ff8040"/><rect x="297" y="91" width="1" height="21" fill="#ff8040"/><rect x="297" y="111" width="9" height="1" fill="#ff8040"/><rect x="305" y="91" width="1" height="21" fill="#ff8040"/><rect x="305" y="90" width="7" height="2" fill="#ff8040"/><rect x="311" y="91" width="1" height="21" fill="#ff8040"/><rect x="316" y="91" width="2" height="21" fill="#ff8040"/><rect x="311" y="111" width="15" height="1" fill="#ff8040"/><rect x="325" y="91" width="1" height="21" fill="#ff8040"/><rect x="325" y="90" width="3" height="2" fill="#ff8040"/><rect x="327" y="91" width="1" height="21" fill="#ff8040"/><rect x="339" y="91" width="4" height="21" fill="#ff8040"/><rect x="327" y="111" width="18" height="1" fill="#ff8040"/><rect x="344" y="91" width="1" height="21" fill="#ff8040"/><rect x="351" y="91" width="3" height="21" fill="#ff8040"/><rect x="344" y="90" width="8" height="2" fill="#ff8040"/><rect x="351" y="91" width="1" height="21" fill="#ff8040"/><rect x="351" y="111" width="7" height="1" fill="#ff8040"/><rect x="357" y="91" width="1" height="21" fill="#ff8040"/><rect x="365" y="91" width="2" height="21" fill="#ff8040"/><rect x="372" y="91" width="4" height="21" fill="#ff8040"/><rect x="357" y="90" width="24" height="2" fill="#ff8040"/><rect x="380" y="91" width="1" height="21" fill="#ff8040"/><rect x="383" y="91" width="2" height="21" fill="#ff8040"/><rect x="380" y="111" width="4" height="1" fill="#ff8040"/><rect x="383" y="91" width="1" height="21" fill="#ff8040"/><rect x="390" y="91" width="1" height="21" fill="#ff8040"/><rect x="383" y="90" width="26" height="2" fill="#ff8040"/><rect x="408" y="91" width="1" height="21" fill="#ff8040"/><rect x="408" y="111" width="3" height="1" fill="#ff8040"/><rect x="410" y="91" width="1" height="21" fill="#ff8040"/><rect x="414" y="91" width="1" height="21" fill="#ff8040"/><rect x="443" y="91" width="1" height="21" fill="#ff8040"/><rect x="447" y="91" width="2" height="21" fill="#ff8040"/><rect x="410" y="90" width="59" height="2" fill="#ff8040"/><rect x="468" y="91" width="1" height="21" fill="#ff8040"/><rect x="471" y="91" width="1" height="21" fill="#ff8040"/><rect x="468" y="111" width="8" height="1" fill="#ff8040"/><rect x="475" y="91" width="1" height="21" fill="#ff8040"/><rect x="478" y="91" width="3" height="21" fill="#ff8040"/><rect x="475" y="90" width="4" height="2" fill="#ff8040"/><rect x="478" y="91" width="1" height="21" fill="#ff8040"/><rect x="478" y="111" width="9" height="1" fill="#ff8040"/><rect x="486" y="91" width="1" height="21" fill="#ff8040"/><rect x="489" y="91" width="1" height="21" fill="#ff8040"/><rect x="496" y="91" width="1" height="21" fill="#ff8040"/><rect x="486" y="90" width="13" height="2" fill="#ff8040"/><rect x="498" y="91" width="1" height="21" fill="#ff8040"/><rect x="501" y="91" width="1" height="21" fill="#ff8040"/><rect x="498" y="111" width="9" height="1" fill="#ff8040"/><rect x="506" y="91" width="1" height="21" fill="#ff8040"/><rect x="506" y="90" width="3" height="2" fill="#ff8040"/><rect x="508" y="91" width="1" height="21" fill="#ff8040"/><rect x="522" y="91" width="1" height="21" fill="#ff8040"/><rect x="508" y="111" width="19" height="1" fill="#ff8040"/><rect x="526" y="91" width="1" height="21" fill="#ff8040"/><rect x="526" y="90" width="4" height="2" fill="#ff8040"/><rect x="529" y="91" width="1" height="21" fill="#ff8040"/><rect x="535" y="91" width="2" height="21" fill="#ff8040"/><rect x="539" y="91" width="1" height="21" fill="#ff8040"/><rect x="529" y="111" width="24" height="1" fill="#ff8040"/><rect x="552" y="91" width="1" height="21" fill="#ff8040"/><rect x="552" y="90" width="3" height="2" fill="#ff8040"/><rect x="554" y="91" width="1" height="21" fill="#ff8040"/><rect x="554" y="111" width="7" height="1" fill="#ff8040"/><rect x="560" y="91" width="1" height="21" fill="#ff8040"/><rect x="563" y="91" width="3" height="21" fill="#ff8040"/><rect x="560" y="90" width="4" height="2" fill="#ff8040"/><rect x="563" y="91" width="1" height="21" fill="#ff8040"/><rect x="563" y="111" width="5" height="1" fill="#ff8040"/><rect x="567" y="91" width="1" height="21" fill="#ff8040"/><rect x="567" y="90" width="9" height="2" fill="#ff8040"/><rect x="575" y="91" width="1" height="21" fill="#ff8040"/><rect x="575" y="111" width="3" height="1" fill="#ff8040"/><rect x="577" y="91" width="1" height="21" fill="#ff8040"/><rect x="581" y="91" width="1" height="21" fill="#ff8040"/><rect x="577" y="90" width="27" height="2" fill="#ff8040"/><rect x="603" y="91" width="1" height="21" fill="#ff8040"/><rect x="618" y="91" width="2" height="21" fill="#ff8040"/><rect x="603" y="111" width="19" height="1" fill="#ff8040"/><rect x="621" y="91" width="1" height="21" fill="#ff8040"/><rect x="621" y="90" width="4" height="2" fill="#ff8040"/><rect x="624" y="91" width="1" height="21" fill="#ff8040"/><rect x="627" y="91" width="1" height="21" fill="#ff8040"/><rect x="624" y="111" width="27" height="1" fill="#ff8040"/><rect x="650" y="91" width="1" height="21" fill="#ff8040"/><rect x="650" y="90" width="4" height="2" fill="#ff8040"/><rect x="653" y="91" width="1" height="21" fill="#ff8040"/><rect x="653" y="111" width="8" height="1" fill="#ff8040"/><rect x="660" y="91" width="1" height="21" fill="#ff8040"/><rect x="660" y="90" width="4" height="2" fill="#ff8040"/><rect x="663" y="91" width="1" height="21" fill="#ff8040"/><rect x="663" y="111" width="5" height="1" fill="#ff8040"/><rect x="667" y="91" width="1" height="21" fill="#ff8040"/><rect x="667" y="90" width="4" height="2" fill="#ff8040"/><rect x="670" y="91" width="1" height="21" fill="#ff8040"/><rect x="670" y="111" width="12" height="1" fill="#ff8040"/><rect x="681" y="91" width="1" height="21" fill="#ff8040"/><rect x="681" y="90" width="5" height="2" fill="#ff8040"/><rect x="685" y="91" width="1" height="21" fill="#ff8040"/><rect x="687" y="91" width="1" height="21" fill="#ff8040"/><rect x="685" y="111" width="28" height="1" fill="#ff8040"/><rect x="712" y="91" width="1" height="21" fill="#ff8040"/><rect x="727" y="91" width="2" height="21" fill="#ff8040"/><rect x="712" y="90" width="19" height="2" fill="#ff8040"/><rect x="730" y="91" width="1" height="21" fill="#ff8040"/><rect x="730" y="111" width="4" height="1" fill="#ff8040"/><rect x="733" y="91" width="1" height="21" fill="#ff8040"/><rect x="737" y="91" width="1" height="21" fill="#ff8040"/><rect x="733" y="90" width="13" height="2" fill="#ff8040"/><rect x="745" y="91" width="1" height="21" fill="#ff8040"/><rect x="745" y="111" width="4" height="1" fill="#ff8040"/><rect x="748" y="91" width="1" height="21" fill="#ff8040"/><rect x="748" y="90" width="6" height="2" fill="#ff8040"/><rect x="753" y="91" width="1" height="21" fill="#ff8040"/><rect x="753" y="111" width="4" height="1" fill="#ff8040"/><rect x="756" y="91" width="1" height="21" fill="#ff8040"/><rect x="756" y="90" width="27" height="2" fill="#ff8040"/><rect x="163" y="116" width="620" height="2" fill="#ffff00"/><rect x="163" y="142" width="620" height="2" fill="#00ff80"/><rect x="163" y="189" width="620" height="1" fill="#0000ff"/><rect x="163" y="215" width="620" height="1" fill="#ff00ff"/><rect x="163" y="241" width="620" height="1" fill="#808080"/><rect x="163" y="267" width="620" height="1" fill="#800000"/><rect x="163" y="293" width="620" height="1" fill="#ff0000"/><rect x="163" y="319" width="620" height="1" fill="#ff8040"/><rect x="163" y="324" width="620" height="2" fill="#ffff00"/><rect x="163" y="350" width="620" height="2" fill="#00ff80"/><rect x="307" y="352" width="1" height="20" fill="#00ff80"/><rect x="333" y="352" width="1" height="20" fill="#00ff80"/><rect x="494" y="352" width="1" height="20" fill="#00ff80"/><rect x="647" y="352" width="1" height="20" fill="#00ff80"/><rect x="163" y="397" width="620" height="1" fill="#0000ff"/><rect x="163" y="402" width="620" height="2" fill="#ff00ff"/><rect x="163" y="449" width="620" height="1" fill="#808080"/><rect x="163" y="454" width="620" height="2" fill="#800000"/><rect x="163" y="501" width="620" height="1" fill="#ff0000"/><rect x="163" y="527" width="620" height="1" fill="#ff8040"/><rect x="163" y="535" width="620" height="19" fill="#ffff00"/><rect x="188" y="535" width="1" height="18" fill="#252525"/><rect x="202" y="535" width="1" height="18" fill="#252525"/><rect x="223" y="535" width="1" height="18" fill="#252525"/><rect x="226" y="535" width="1" height="18" fill="#252525"/><rect x="306" y="535" width="1" height="18" fill="#252525"/><rect x="425" y="535" width="1" height="18" fill="#252525"/><rect x="484" y="535" width="1" height="18" fill="#252525"/><rect x="494" y="535" width="1" height="18" fill="#252525"/><rect x="521" y="535" width="1" height="18" fill="#252525"/><rect x="597" y="535" width="1" height="18" fill="#252525"/><rect x="650" y="535" width="1" height="18" fill="#252525"/><rect x="694" y="535" width="2" height="18" fill="#252525"/><rect x="703" y="535" width="1" height="18" fill="#252525"/><rect x="733" y="535" width="1" height="18" fill="#252525"/><rect x="167" y="532" width="1" height="3" fill="#ffff00"/><rect x="166" y="533" width="1" height="1" fill="#ffff00"/><rect x="171" y="533" width="3" height="1" fill="#ffff00"/><rect x="172" y="532" width="1" height="3" fill="#ffff00"/><rect x="175" y="532" width="1" height="3" fill="#ffff00"/><rect x="174" y="533" width="1" height="1" fill="#ffff00"/><rect x="182" y="532" width="1" height="3" fill="#ffff00"/><rect x="181" y="533" width="1" height="1" fill="#ffff00"/><rect x="185" y="532" width="1" height="3" fill="#ffff00"/><rect x="184" y="533" width="1" height="1" fill="#ffff00"/><rect x="186" y="533" width="1" height="2" fill="#ffff00"/><rect x="192" y="533" width="3" height="1" fill="#ffff00"/><rect x="193" y="532" width="1" height="3" fill="#ffff00"/><rect x="196" y="532" width="1" height="3" fill="#ffff00"/><rect x="195" y="533" width="1" height="1" fill="#ffff00"/><rect x="197" y="533" width="1" height="2" fill="#ffff00"/><rect x="207" y="533" width="3" height="1" fill="#ffff00"/><rect x="208" y="532" width="1" height="3" fill="#ffff00"/><rect x="211" y="532" width="1" height="3" fill="#ffff00"/><rect x="210" y="533" width="1" height="1" fill="#ffff00"/><rect x="220" y="532" width="1" height="3" fill="#ffff00"/><rect x="219" y="533" width="1" height="1" fill="#ffff00"/><rect x="221" y="533" width="1" height="2" fill="#ffff00"/><rect x="225" y="532" width="1" height="3" fill="#ffff00"/><rect x="224" y="533" width="1" height="1" fill="#ffff00"/><rect x="231" y="533" width="3" height="1" fill="#ffff00"/><rect x="232" y="532" width="1" height="3" fill="#ffff00"/><rect x="235" y="532" width="1" height="3" fill="#ffff00"/><rect x="234" y="533" width="1" height="1" fill="#ffff00"/><rect x="248" y="532" width="1" height="3" fill="#ffff00"/><rect x="247" y="533" width="1" height="1" fill="#ffff00"/><rect x="255" y="533" width="3" height="1" fill="#ffff00"/><rect x="256" y="532" width="1" height="3" fill="#ffff00"/><rect x="259" y="532" width="1" height="3" fill="#ffff00"/><rect x="258" y="533" width="1" height="1" fill="#ffff00"/><rect x="271" y="533" width="3" height="1" fill="#ffff00"/><rect x="272" y="532" width="1" height="3" fill="#ffff00"/><rect x="275" y="532" width="1" height="3" fill="#ffff00"/><rect x="274" y="533" width="1" height="1" fill="#ffff00"/><rect x="276" y="533" width="3" height="1" fill="#ffff00"/><rect x="277" y="532" width="1" height="3" fill="#ffff00"/><rect x="280" y="532" width="1" height="3" fill="#ffff00"/><rect x="279" y="533" width="1" height="1" fill="#ffff00"/><rect x="281" y="533" width="3" height="1" fill="#ffff00"/><rect x="282" y="532" width="1" height="3" fill="#ffff00"/><rect x="285" y="532" width="1" height="3" fill="#ffff00"/><rect x="284" y="533" width="1" height="1" fill="#ffff00"/><rect x="287" y="532" width="1" height="3" fill="#ffff00"/><rect x="286" y="533" width="1" height="1" fill="#ffff00"/><rect x="288" y="533" width="3" height="1" fill="#ffff00"/><rect x="289" y="532" width="1" height="3" fill="#ffff00"/><rect x="292" y="532" width="1" height="3" fill="#ffff00"/><rect x="291" y="533" width="1" height="1" fill="#ffff00"/><rect x="293" y="533" width="3" height="1" fill="#ffff00"/><rect x="294" y="532" width="1" height="3" fill="#ffff00"/><rect x="297" y="532" width="1" height="3" fill="#ffff00"/><rect x="296" y="533" width="1" height="1" fill="#ffff00"/><rect x="298" y="533" width="3" height="1" fill="#ffff00"/><rect x="299" y="532" width="1" height="3" fill="#ffff00"/><rect x="302" y="532" width="1" height="3" fill="#ffff00"/><rect x="301" y="533" width="1" height="1" fill="#ffff00"/><rect x="304" y="532" width="1" height="3" fill="#ffff00"/><rect x="303" y="533" width="1" height="1" fill="#ffff00"/><rect x="309" y="532" width="1" height="3" fill="#ffff00"/><rect x="308" y="533" width="1" height="1" fill="#ffff00"/><rect x="311" y="532" width="1" height="3" fill="#ffff00"/><rect x="310" y="533" width="1" height="1" fill="#ffff00"/><rect x="315" y="533" width="3" height="1" fill="#ffff00"/><rect x="316" y="532" width="1" height="3" fill="#ffff00"/><rect x="319" y="532" width="1" height="3" fill="#ffff00"/><rect x="318" y="533" width="1" height="1" fill="#ffff00"/><rect x="321" y="532" width="1" height="3" fill="#ffff00"/><rect x="320" y="533" width="1" height="1" fill="#ffff00"/><rect x="324" y="532" width="1" height="3" fill="#ffff00"/><rect x="323" y="533" width="1" height="1" fill="#ffff00"/><rect x="325" y="533" width="1" height="2" fill="#ffff00"/><rect x="331" y="532" width="1" height="3" fill="#ffff00"/><rect x="330" y="533" width="1" height="1" fill="#ffff00"/><rect x="333" y="533" width="1" height="2" fill="#ffff00"/><rect x="340" y="532" width="1" height="3" fill="#ffff00"/><rect x="339" y="533" width="1" height="1" fill="#ffff00"/><rect x="343" y="532" width="1" height="3" fill="#ffff00"/><rect x="342" y="533" width="1" height="1" fill="#ffff00"/><rect x="345" y="533" width="1" height="2" fill="#ffff00"/><rect x="351" y="532" width="1" height="3" fill="#ffff00"/><rect x="350" y="533" width="1" height="1" fill="#ffff00"/><rect x="353" y="533" width="1" height="2" fill="#ffff00"/><rect x="359" y="532" width="1" height="3" fill="#ffff00"/><rect x="358" y="533" width="1" height="1" fill="#ffff00"/><rect x="361" y="533" width="1" height="2" fill="#ffff00"/><rect x="365" y="532" width="1" height="3" fill="#ffff00"/><rect x="364" y="533" width="1" height="1" fill="#ffff00"/><rect x="367" y="533" width="3" height="1" fill="#ffff00"/><rect x="368" y="532" width="1" height="3" fill="#ffff00"/><rect x="371" y="532" width="1" height="3" fill="#ffff00"/><rect x="370" y="533" width="1" height="1" fill="#ffff00"/><rect x="373" y="532" width="1" height="3" fill="#ffff00"/><rect x="372" y="533" width="1" height="1" fill="#ffff00"/><rect x="374" y="533" width="1" height="2" fill="#ffff00"/><rect x="377" y="533" width="3" height="1" fill="#ffff00"/><rect x="378" y="532" width="1" height="3" fill="#ffff00"/><rect x="381" y="532" width="1" height="3" fill="#ffff00"/><rect x="380" y="533" width="1" height="1" fill="#ffff00"/><rect x="382" y="533" width="3" height="1" fill="#ffff00"/><rect x="383" y="532" width="1" height="3" fill="#ffff00"/><rect x="386" y="532" width="1" height="3" fill="#ffff00"/><rect x="385" y="533" width="1" height="1" fill="#ffff00"/><rect x="388" y="532" width="1" height="3" fill="#ffff00"/><rect x="387" y="533" width="1" height="1" fill="#ffff00"/><rect x="398" y="533" width="3" height="1" fill="#ffff00"/><rect x="399" y="532" width="1" height="3" fill="#ffff00"/><rect x="402" y="532" width="1" height="3" fill="#ffff00"/><rect x="401" y="533" width="1" height="1" fill="#ffff00"/><rect x="404" y="532" width="1" height="3" fill="#ffff00"/><rect x="403" y="533" width="1" height="1" fill="#ffff00"/><rect x="406" y="533" width="1" height="2" fill="#ffff00"/><rect x="411" y="533" width="3" height="1" fill="#ffff00"/><rect x="412" y="532" width="1" height="3" fill="#ffff00"/><rect x="415" y="532" width="1" height="3" fill="#ffff00"/><rect x="414" y="533" width="1" height="1" fill="#ffff00"/><rect x="416" y="533" width="3" height="1" fill="#ffff00"/><rect x="417" y="532" width="1" height="3" fill="#ffff00"/><rect x="420" y="532" width="1" height="3" fill="#ffff00"/><rect x="419" y="533" width="1" height="1" fill="#ffff00"/><rect x="422" y="532" width="1" height="3" fill="#ffff00"/><rect x="421" y="533" width="1" height="1" fill="#ffff00"/><rect x="427" y="532" width="1" height="3" fill="#ffff00"/><rect x="426" y="533" width="1" height="1" fill="#ffff00"/><rect x="428" y="533" width="3" height="1" fill="#ffff00"/><rect x="429" y="532" width="1" height="3" fill="#ffff00"/><rect x="432" y="532" width="1" height="3" fill="#ffff00"/><rect x="431" y="533" width="1" height="1" fill="#ffff00"/><rect x="433" y="533" width="1" height="2" fill="#ffff00"/><rect x="443" y="533" width="3" height="1" fill="#ffff00"/><rect x="444" y="532" width="1" height="3" fill="#ffff00"/><rect x="447" y="532" width="1" height="3" fill="#ffff00"/><rect x="446" y="533" width="1" height="1" fill="#ffff00"/><rect x="448" y="533" width="3" height="1" fill="#ffff00"/><rect x="449" y="532" width="1" height="3" fill="#ffff00"/><rect x="452" y="532" width="1" height="3" fill="#ffff00"/><rect x="451" y="533" width="1" height="1" fill="#ffff00"/><rect x="454" y="532" width="1" height="3" fill="#ffff00"/><rect x="453" y="533" width="1" height="1" fill="#ffff00"/><rect x="457" y="533" width="3" height="1" fill="#ffff00"/><rect x="458" y="532" width="1" height="3" fill="#ffff00"/><rect x="461" y="532" width="1" height="3" fill="#ffff00"/><rect x="460" y="533" width="1" height="1" fill="#ffff00"/><rect x="462" y="533" width="1" height="2" fill="#ffff00"/><rect x="465" y="532" width="1" height="3" fill="#ffff00"/><rect x="464" y="533" width="1" height="1" fill="#ffff00"/><rect x="468" y="532" width="1" height="3" fill="#ffff00"/><rect x="467" y="533" width="1" height="1" fill="#ffff00"/><rect x="471" y="532" width="1" height="3" fill="#ffff00"/><rect x="470" y="533" width="1" height="1" fill="#ffff00"/><rect x="474" y="533" width="3" height="1" fill="#ffff00"/><rect x="475" y="532" width="1" height="3" fill="#ffff00"/><rect x="478" y="532" width="1" height="3" fill="#ffff00"/><rect x="477" y="533" width="1" height="1" fill="#ffff00"/><rect x="480" y="532" width="1" height="3" fill="#ffff00"/><rect x="479" y="533" width="1" height="1" fill="#ffff00"/><rect x="482" y="533" width="1" height="2" fill="#ffff00"/><rect x="486" y="532" width="1" height="3" fill="#ffff00"/><rect x="485" y="533" width="1" height="1" fill="#ffff00"/><rect x="489" y="532" width="1" height="3" fill="#ffff00"/><rect x="488" y="533" width="1" height="1" fill="#ffff00"/><rect x="492" y="532" width="1" height="3" fill="#ffff00"/><rect x="491" y="533" width="1" height="1" fill="#ffff00"/><rect x="501" y="533" width="3" height="1" fill="#ffff00"/><rect x="502" y="532" width="1" height="3" fill="#ffff00"/><rect x="505" y="532" width="1" height="3" fill="#ffff00"/><rect x="504" y="533" width="1" height="1" fill="#ffff00"/><rect x="507" y="532" width="1" height="3" fill="#ffff00"/><rect x="506" y="533" width="1" height="1" fill="#ffff00"/><rect x="510" y="532" width="1" height="3" fill="#ffff00"/><rect x="509" y="533" width="1" height="1" fill="#ffff00"/><rect x="512" y="533" width="3" height="1" fill="#ffff00"/><rect x="513" y="532" width="1" height="3" fill="#ffff00"/><rect x="516" y="532" width="1" height="3" fill="#ffff00"/><rect x="515" y="533" width="1" height="1" fill="#ffff00"/><rect x="524" y="533" width="3" height="1" fill="#ffff00"/><rect x="525" y="532" width="1" height="3" fill="#ffff00"/><rect x="528" y="532" width="1" height="3" fill="#ffff00"/><rect x="527" y="533" width="1" height="1" fill="#ffff00"/><rect x="529" y="533" width="3" height="1" fill="#ffff00"/><rect x="530" y="532" width="1" height="3" fill="#ffff00"/><rect x="533" y="532" width="1" height="3" fill="#ffff00"/><rect x="532" y="533" width="1" height="1" fill="#ffff00"/><rect x="534" y="533" width="1" height="2" fill="#ffff00"/><rect x="542" y="532" width="1" height="3" fill="#ffff00"/><rect x="541" y="533" width="1" height="1" fill="#ffff00"/><rect x="544" y="533" width="1" height="2" fill="#ffff00"/><rect x="549" y="533" width="3" height="1" fill="#ffff00"/><rect x="550" y="532" width="1" height="3" fill="#ffff00"/><rect x="553" y="532" width="1" height="3" fill="#ffff00"/><rect x="552" y="533" width="1" height="1" fill="#ffff00"/><rect x="554" y="533" width="1" height="2" fill="#ffff00"/><rect x="557" y="533" width="3" height="1" fill="#ffff00"/><rect x="558" y="532" width="1" height="3" fill="#ffff00"/><rect x="561" y="532" width="1" height="3" fill="#ffff00"/><rect x="560" y="533" width="1" height="1" fill="#ffff00"/><rect x="563" y="532" width="1" height="3" fill="#ffff00"/><rect x="562" y="533" width="1" height="1" fill="#ffff00"/><rect x="570" y="533" width="3" height="1" fill="#ffff00"/><rect x="571" y="532" width="1" height="3" fill="#ffff00"/><rect x="574" y="532" width="1" height="3" fill="#ffff00"/><rect x="573" y="533" width="1" height="1" fill="#ffff00"/><rect x="575" y="533" width="3" height="1" fill="#ffff00"/><rect x="576" y="532" width="1" height="3" fill="#ffff00"/><rect x="579" y="532" width="1" height="3" fill="#ffff00"/><rect x="578" y="533" width="1" height="1" fill="#ffff00"/><rect x="580" y="533" width="3" height="1" fill="#ffff00"/><rect x="581" y="532" width="1" height="3" fill="#ffff00"/><rect x="584" y="532" width="1" height="3" fill="#ffff00"/><rect x="583" y="533" width="1" height="1" fill="#ffff00"/><rect x="585" y="533" width="3" height="1" fill="#ffff00"/><rect x="586" y="532" width="1" height="3" fill="#ffff00"/><rect x="589" y="532" width="1" height="3" fill="#ffff00"/><rect x="588" y="533" width="1" height="1" fill="#ffff00"/><rect x="591" y="532" width="1" height="3" fill="#ffff00"/><rect x="590" y="533" width="1" height="1" fill="#ffff00"/><rect x="593" y="532" width="1" height="3" fill="#ffff00"/><rect x="592" y="533" width="1" height="1" fill="#ffff00"/><rect x="595" y="533" width="3" height="1" fill="#ffff00"/><rect x="596" y="532" width="1" height="3" fill="#ffff00"/><rect x="599" y="532" width="1" height="3" fill="#ffff00"/><rect x="598" y="533" width="1" height="1" fill="#ffff00"/><rect x="604" y="533" width="3" height="1" fill="#ffff00"/><rect x="605" y="532" width="1" height="3" fill="#ffff00"/><rect x="608" y="532" width="1" height="3" fill="#ffff00"/><rect x="607" y="533" width="1" height="1" fill="#ffff00"/><rect x="609" y="533" width="3" height="1" fill="#ffff00"/><rect x="610" y="532" width="1" height="3" fill="#ffff00"/><rect x="613" y="532" width="1" height="3" fill="#ffff00"/><rect x="612" y="533" width="1" height="1" fill="#ffff00"/><rect x="615" y="532" width="1" height="3" fill="#ffff00"/><rect x="614" y="533" width="1" height="1" fill="#ffff00"/><rect x="616" y="533" width="3" height="1" fill="#ffff00"/><rect x="617" y="532" width="1" height="3" fill="#ffff00"/><rect x="620" y="532" width="1" height="3" fill="#ffff00"/><rect x="619" y="533" width="1" height="1" fill="#ffff00"/><rect x="621" y="533" width="3" height="1" fill="#ffff00"/><rect x="622" y="532" width="1" height="3" fill="#ffff00"/><rect x="625" y="532" width="1" height="3" fill="#ffff00"/><rect x="624" y="533" width="1" height="1" fill="#ffff00"/><rect x="627" y="532" width="1" height="3" fill="#ffff00"/><rect x="626" y="533" width="1" height="1" fill="#ffff00"/><rect x="629" y="532" width="1" height="3" fill="#ffff00"/><rect x="628" y="533" width="1" height="1" fill="#ffff00"/><rect x="637" y="532" width="1" height="3" fill="#ffff00"/><rect x="636" y="533" width="1" height="1" fill="#ffff00"/><rect x="623" y="533" width="3" height="1" fill="#ffff00"/><rect x="624" y="532" width="1" height="3" fill="#ffff00"/><rect x="627" y="532" width="1" height="3" fill="#ffff00"/><rect x="626" y="533" width="1" height="1" fill="#ffff00"/><rect x="629" y="532" width="1" height="3" fill="#ffff00"/><rect x="628" y="533" width="1" height="1" fill="#ffff00"/><rect x="631" y="533" width="1" height="2" fill="#ffff00"/><rect x="639" y="533" width="3" height="1" fill="#ffff00"/><rect x="640" y="532" width="1" height="3" fill="#ffff00"/><rect x="643" y="532" width="1" height="3" fill="#ffff00"/><rect x="642" y="533" width="1" height="1" fill="#ffff00"/><rect x="648" y="533" width="3" height="1" fill="#ffff00"/><rect x="649" y="532" width="1" height="3" fill="#ffff00"/><rect x="652" y="532" width="1" height="3" fill="#ffff00"/><rect x="651" y="533" width="1" height="1" fill="#ffff00"/><rect x="654" y="532" width="1" height="3" fill="#ffff00"/><rect x="653" y="533" width="1" height="1" fill="#ffff00"/><rect x="655" y="533" width="1" height="2" fill="#ffff00"/><rect x="658" y="532" width="1" height="3" fill="#ffff00"/><rect x="657" y="533" width="1" height="1" fill="#ffff00"/><rect x="660" y="533" width="3" height="1" fill="#ffff00"/><rect x="661" y="532" width="1" height="3" fill="#ffff00"/><rect x="664" y="532" width="1" height="3" fill="#ffff00"/><rect x="663" y="533" width="1" height="1" fill="#ffff00"/><rect x="666" y="532" width="1" height="3" fill="#ffff00"/><rect x="665" y="533" width="1" height="1" fill="#ffff00"/><rect x="669" y="532" width="1" height="3" fill="#ffff00"/><rect x="668" y="533" width="1" height="1" fill="#ffff00"/><rect x="671" y="533" width="1" height="2" fill="#ffff00"/><rect x="685" y="532" width="1" height="3" fill="#ffff00"/><rect x="684" y="533" width="1" height="1" fill="#ffff00"/><rect x="687" y="533" width="1" height="2" fill="#ffff00"/><rect x="692" y="532" width="1" height="3" fill="#ffff00"/><rect x="691" y="533" width="1" height="1" fill="#ffff00"/><rect x="696" y="533" width="3" height="1" fill="#ffff00"/><rect x="697" y="532" width="1" height="3" fill="#ffff00"/><rect x="700" y="532" width="1" height="3" fill="#ffff00"/><rect x="699" y="533" width="1" height="1" fill="#ffff00"/><rect x="705" y="532" width="1" height="3" fill="#ffff00"/><rect x="704" y="533" width="1" height="1" fill="#ffff00"/><rect x="707" y="532" width="1" height="3" fill="#ffff00"/><rect x="706" y="533" width="1" height="1" fill="#ffff00"/><rect x="710" y="533" width="3" height="1" fill="#ffff00"/><rect x="711" y="532" width="1" height="3" fill="#ffff00"/><rect x="714" y="532" width="1" height="3" fill="#ffff00"/><rect x="713" y="533" width="1" height="1" fill="#ffff00"/><rect x="716" y="532" width="1" height="3" fill="#ffff00"/><rect x="715" y="533" width="1" height="1" fill="#ffff00"/><rect x="723" y="532" width="1" height="3" fill="#ffff00"/><rect x="722" y="533" width="1" height="1" fill="#ffff00"/><rect x="725" y="533" width="1" height="2" fill="#ffff00"/><rect x="730" y="532" width="1" height="3" fill="#ffff00"/><rect x="729" y="533" width="1" height="1" fill="#ffff00"/><rect x="734" y="532" width="1" height="3" fill="#ffff00"/><rect x="733" y="533" width="1" height="1" fill="#ffff00"/><rect x="742" y="532" width="1" height="3" fill="#ffff00"/><rect x="741" y="533" width="1" height="1" fill="#ffff00"/><rect x="744" y="532" width="1" height="3" fill="#ffff00"/><rect x="743" y="533" width="1" height="1" fill="#ffff00"/><rect x="755" y="533" width="3" height="1" fill="#ffff00"/><rect x="756" y="532" width="1" height="3" fill="#ffff00"/><rect x="759" y="532" width="1" height="3" fill="#ffff00"/><rect x="758" y="533" width="1" height="1" fill="#ffff00"/><rect x="761" y="532" width="1" height="3" fill="#ffff00"/><rect x="760" y="533" width="1" height="1" fill="#ffff00"/><rect x="764" y="532" width="1" height="3" fill="#ffff00"/><rect x="763" y="533" width="1" height="1" fill="#ffff00"/><rect x="767" y="532" width="1" height="3" fill="#ffff00"/><rect x="766" y="533" width="1" height="1" fill="#ffff00"/><rect x="775" y="532" width="1" height="3" fill="#ffff00"/><rect x="774" y="533" width="1" height="1" fill="#ffff00"/><rect x="777" y="533" width="1" height="2" fill="#ffff00"/><rect x="626" y="532" width="6" height="3" fill="#ffff00"/><rect x="163" y="579" width="620" height="1" fill="#00ff80"/><rect x="163" y="584" width="620" height="2" fill="#0000ff"/><rect x="163" y="610" width="620" height="2" fill="#ff00ff"/><rect x="656" y="612" width="1" height="20" fill="#ff00ff"/><rect x="666" y="612" width="1" height="20" fill="#ff00ff"/><rect x="162" y="63" width="3" height="1" fill="#ffffff"/><rect x="168" y="63" width="3" height="1" fill="#ffffff"/><rect x="174" y="63" width="3" height="1" fill="#ffffff"/><rect x="180" y="63" width="3" height="1" fill="#ffffff"/><rect x="186" y="63" width="3" height="1" fill="#ffffff"/><rect x="192" y="63" width="3" height="1" fill="#ffffff"/><rect x="198" y="63" width="3" height="1" fill="#ffffff"/><rect x="204" y="63" width="3" height="1" fill="#ffffff"/><rect x="210" y="63" width="3" height="1" fill="#ffffff"/><rect x="216" y="63" width="3" height="1" fill="#ffffff"/><rect x="222" y="63" width="3" height="1" fill="#ffffff"/><rect x="228" y="63" width="3" height="1" fill="#ffffff"/><rect x="234" y="63" width="3" height="1" fill="#ffffff"/><rect x="240" y="63" width="3" height="1" fill="#ffffff"/><rect x="246" y="63" width="3" height="1" fill="#ffffff"/><rect x="252" y="63" width="3" height="1" fill="#ffffff"/><rect x="258" y="63" width="3" height="1" fill="#ffffff"/><rect x="264" y="63" width="3" height="1" fill="#ffffff"/><rect x="270" y="63" width="3" height="1" fill="#ffffff"/><rect x="276" y="63" width="3" height="1" fill="#ffffff"/><rect x="282" y="63" width="3" height="1" fill="#ffffff"/><rect x="288" y="63" width="3" height="1" fill="#ffffff"/><rect x="294" y="63" width="3" height="1" fill="#ffffff"/><rect x="300" y="63" width="3" height="1" fill="#ffffff"/><rect x="306" y="63" width="3" height="1" fill="#ffffff"/><rect x="312" y="63" width="3" height="1" fill="#ffffff"/><rect x="318" y="63" width="3" height="1" fill="#ffffff"/><rect x="324" y="63" width="3" height="1" fill="#ffffff"/><rect x="330" y="63" width="3" height="1" fill="#ffffff"/><rect x="336" y="63" width="3" height="1" fill="#ffffff"/><rect x="342" y="63" width="3" height="1" fill="#ffffff"/><rect x="348" y="63" width="3" height="1" fill="#ffffff"/><rect x="354" y="63" width="3" height="1" fill="#ffffff"/><rect x="360" y="63" width="3" height="1" fill="#ffffff"/><rect x="366" y="63" width="3" height="1" fill="#ffffff"/><rect x="372" y="63" width="3" height="1" fill="#ffffff"/><rect x="378" y="63" width="3" height="1" fill="#ffffff"/><rect x="384" y="63" width="3" height="1" fill="#ffffff"/><rect x="390" y="63" width="3" height="1" fill="#ffffff"/><rect x="396" y="63" width="3" height="1" fill="#ffffff"/><rect x="402" y="63" width="3" height="1" fill="#ffffff"/><rect x="408" y="63" width="3" height="1" fill="#ffffff"/><rect x="414" y="63" width="3" height="1" fill="#ffffff"/><rect x="420" y="63" width="3" height="1" fill="#ffffff"/><rect x="426" y="63" width="3" height="1" fill="#ffffff"/><rect x="432" y="63" width="3" height="1" fill="#ffffff"/><rect x="438" y="63" width="3" height="1" fill="#ffffff"/><rect x="444" y="63" width="3" height="1" fill="#ffffff"/><rect x="450" y="63" width="3" height="1" fill="#ffffff"/><rect x="456" y="63" width="3" height="1" fill="#ffffff"/><rect x="462" y="63" width="3" height="1" fill="#ffffff"/><rect x="468" y="63" width="3" height="1" fill="#ffffff"/><rect x="474" y="63" width="3" height="1" fill="#ffffff"/><rect x="480" y="63" width="3" height="1" fill="#ffffff"/><rect x="486" y="63" width="3" height="1" fill="#ffffff"/><rect x="492" y="63" width="3" height="1" fill="#ffffff"/><rect x="498" y="63" width="3" height="1" fill="#ffffff"/><rect x="504" y="63" width="3" height="1" fill="#ffffff"/><rect x="510" y="63" width="3" height="1" fill="#ffffff"/><rect x="516" y="63" width="3" height="1" fill="#ffffff"/><rect x="522" y="63" width="3" height="1" fill="#ffffff"/><rect x="528" y="63" width="3" height="1" fill="#ffffff"/><rect x="534" y="63" width="3" height="1" fill="#ffffff"/><rect x="540" y="63" width="3" height="1" fill="#ffffff"/><rect x="546" y="63" width="3" height="1" fill="#ffffff"/><rect x="552" y="63" width="3" height="1" fill="#ffffff"/><rect x="558" y="63" width="3" height="1" fill="#ffffff"/><rect x="564" y="63" width="3" height="1" fill="#ffffff"/><rect x="570" y="63" width="3" height="1" fill="#ffffff"/><rect x="576" y="63" width="3" height="1" fill="#ffffff"/><rect x="582" y="63" width="3" height="1" fill="#ffffff"/><rect x="588" y="63" width="3" height="1" fill="#ffffff"/><rect x="594" y="63" width="3" height="1" fill="#ffffff"/><rect x="600" y="63" width="3" height="1" fill="#ffffff"/><rect x="606" y="63" width="3" height="1" fill="#ffffff"/><rect x="612" y="63" width="3" height="1" fill="#ffffff"/><rect x="618" y="63" width="3" height="1" fill="#ffffff"/><rect x="624" y="63" width="3" height="1" fill="#ffffff"/><rect x="630" y="63" width="3" height="1" fill="#ffffff"/><rect x="636" y="63" width="3" height="1" fill="#ffffff"/><rect x="642" y="63" width="3" height="1" fill="#ffffff"/><rect x="648" y="63" width="3" height="1" fill="#ffffff"/><rect x="654" y="63" width="3" height="1" fill="#ffffff"/><rect x="660" y="63" width="3" height="1" fill="#ffffff"/><rect x="666" y="63" width="3" height="1" fill="#ffffff"/><rect x="672" y="63" width="3" height="1" fill="#ffffff"/><rect x="678" y="63" width="3" height="1" fill="#ffffff"/><rect x="684" y="63" width="3" height="1" fill="#ffffff"/><rect x="690" y="63" width="3" height="1" fill="#ffffff"/><rect x="696" y="63" width="3" height="1" fill="#ffffff"/><rect x="702" y="63" width="3" height="1" fill="#ffffff"/><rect x="708" y="63" width="3" height="1" fill="#ffffff"/><rect x="714" y="63" width="3" height="1" fill="#ffffff"/><rect x="720" y="63" width="3" height="1" fill="#ffffff"/><rect x="726" y="63" width="3" height="1" fill="#ffffff"/><rect x="732" y="63" width="3" height="1" fill="#ffffff"/><rect x="738" y="63" width="3" height="1" fill="#ffffff"/><rect x="744" y="63" width="3" height="1" fill="#ffffff"/><rect x="750" y="63" width="3" height="1" fill="#ffffff"/><rect x="756" y="63" width="3" height="1" fill="#ffffff"/><rect x="762" y="63" width="3" height="1" fill="#ffffff"/><rect x="768" y="63" width="3" height="1" fill="#ffffff"/><rect x="774" y="63" width="3" height="1" fill="#ffffff"/><rect x="780" y="63" width="3" height="1" fill="#ffffff"/>
<rect x="162" y="27" width="1" height="8" fill="#ffffff"/><rect x="182" y="30" width="1" height="4" fill="#ffffff"/><rect x="202" y="30" width="1" height="4" fill="#ffffff"/><rect x="222" y="30" width="1" height="4" fill="#ffffff"/><rect x="242" y="30" width="1" height="4" fill="#ffffff"/><rect x="262" y="27" width="1" height="8" fill="#ffffff"/><rect x="282" y="30" width="1" height="4" fill="#ffffff"/><rect x="302" y="30" width="1" height="4" fill="#ffffff"/><rect x="322" y="30" width="1" height="4" fill="#ffffff"/><rect x="342" y="30" width="1" height="4" fill="#ffffff"/><rect x="362" y="27" width="1" height="8" fill="#ffffff"/><rect x="382" y="30" width="1" height="4" fill="#ffffff"/><rect x="402" y="30" width="1" height="4" fill="#ffffff"/><rect x="422" y="30" width="1" height="4" fill="#ffffff"/><rect x="442" y="30" width="1" height="4" fill="#ffffff"/><rect x="462" y="27" width="1" height="8" fill="#ffffff"/><rect x="482" y="30" width="1" height="4" fill="#ffffff"/><rect x="502" y="30" width="1" height="4" fill="#ffffff"/><rect x="522" y="30" width="1" height="4" fill="#ffffff"/><rect x="542" y="30" width="1" height="4" fill="#ffffff"/><rect x="562" y="27" width="1" height="8" fill="#ffffff"/><rect x="582" y="30" width="1" height="4" fill="#ffffff"/><rect x="602" y="30" width="1" height="4" fill="#ffffff"/><rect x="622" y="30" width="1" height="4" fill="#ffffff"/><rect x="642" y="30" width="1" height="4" fill="#ffffff"/><rect x="662" y="27" width="1" height="8" fill="#ffffff"/><rect x="682" y="30" width="1" height="4" fill="#ffffff"/><rect x="702" y="30" width="1" height="4" fill="#ffffff"/><rect x="722" y="30" width="1" height="4" fill="#ffffff"/><rect x="742" y="30" width="1" height="4" fill="#ffffff"/><rect x="762" y="27" width="1" height="8" fill="#ffffff"/><rect x="782" y="30" width="1" height="4" fill="#ffffff"/>
</svg>
<div class="abs" id="cursor"></div>
<svg class="abs" style="left:160px;top:0" width="20" height="30" viewBox="160 0 20 30" shape-rendering="crispEdges"><rect x="163" y="12" width="9" height="12" fill="#000"/><rect x="162" y="11" width="9" height="12" fill="#0080ff"/><rect x="168" y="5" width="1" height="12" fill="#000"/><rect x="163" y="16" width="6" height="1" fill="#000"/><rect x="162" y="4" width="6" height="12" fill="#ff0000"/><rect x="162" y="6" width="3" height="1" fill="#000"/><rect x="162" y="18" width="2" height="1" fill="#000"/><rect x="163" y="19" width="3" height="1" fill="#000"/><rect x="166" y="18" width="1" height="1" fill="#000"/></svg>
<div class="abs" id="sbL"></div><div class="abs" id="sbLl"></div><div class="abs" id="sbLb"></div><div class="abs" id="sbLv"></div><div class="abs" id="tools"></div>
<div class="abs" id="sbRb"></div><div class="abs" id="sbRt"></div><div class="abs" id="sbRh"></div><div class="abs" id="band"></div><div class="abs" id="foot"></div><div class="abs" id="foot2"></div>
<div class="abs" id="ftxt">ator</div><div class="abs" id="cy"></div>
<svg class="abs" style="left:0;top:630px" width="783" height="49" viewBox="0 630 783 49"><g shape-rendering="crispEdges"><rect x="22" y="642" width="2" height="11" fill="#ffffff"/><rect x="25" y="642" width="2" height="11" fill="#ffffff"/><rect x="28" y="642" width="2" height="11" fill="#ffffff"/><rect x="519" y="642" width="2" height="11" fill="#ffffff"/><rect x="522" y="642" width="2" height="11" fill="#ffffff"/><rect x="525" y="642" width="2" height="11" fill="#ffffff"/></g><polygon points="82,645 85.4,648 82,651" fill="#f0f0f0"/><polygon points="172,645 168.6,648 172,651" fill="#f0f0f0"/><path d="M97.3 650 L99.5 648.2 L101.2 653 L104.5 642.8 L106.6 649.6 L109.2 647.8" stroke="#828282" stroke-width="1.3" fill="none" stroke-linejoin="round"/><defs><linearGradient id="cam" x1="0.8" y1="0" x2="0.2" y2="1"><stop offset="0" stop-color="#b0b0b0"/><stop offset="0.5" stop-color="#7c7c7c"/><stop offset="1" stop-color="#505050"/></linearGradient></defs><circle cx="115" cy="646" r="5.9" fill="url(#cam)"/><circle cx="115.2" cy="645.8" r="3.4" fill="#2a2a2a" stroke="#8a8a8a" stroke-width="0.7"/><circle cx="115.3" cy="645.8" r="1.7" fill="#0c0c0c"/><circle cx="114" cy="644.8" r="0.7" fill="#8a8a8a"/><rect x="110" y="653" width="9.5" height="1" fill="#6a6a6a"/><circle cx="144" cy="646" r="5.9" fill="url(#cam)"/><circle cx="144.2" cy="645.8" r="3.4" fill="#2a2a2a" stroke="#8a8a8a" stroke-width="0.7"/><circle cx="144.3" cy="645.8" r="1.7" fill="#0c0c0c"/><circle cx="143" cy="644.8" r="0.7" fill="#8a8a8a"/><rect x="139" y="653" width="9.5" height="1" fill="#6a6a6a"/><defs><linearGradient id="dot" x1="0" y1="0" x2="0" y2="1"><stop offset="0" stop-color="#8a8a8a"/><stop offset="1" stop-color="#d0d0d0"/></linearGradient></defs><circle cx="128.5" cy="651" r="2.7" fill="url(#dot)"/><circle cx="134.8" cy="651" r="2.7" fill="url(#dot)"/></svg>
<svg class="abs" style="left:154px;top:346px" width="6" height="17" viewBox="154 346 6 17"><polygon points="160,347.5 154,354.5 160,361.5" fill="#fff"/></svg>
</body></html>
